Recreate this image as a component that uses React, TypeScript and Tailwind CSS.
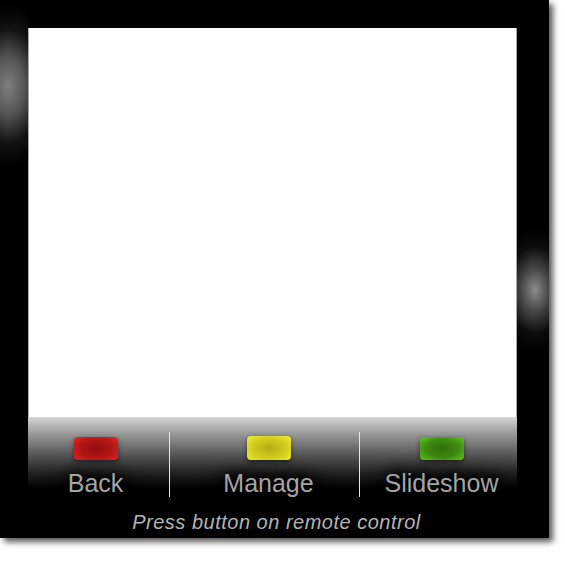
import React from 'react';

type Action = {
  label: string;
  width: string;
  shift: string;
  button: string;
};

const actions: Action[] = [
  {
    label: 'Back',
    width: 'w-[141px]',
    shift: 'pr-[6px]',
    button: 'mt-[5px] bg-[radial-gradient(ellipse_at_center,#8e0e0e_0%,#b41616_55%,#e82424_100%)]',
  },
  {
    label: 'Manage',
    width: 'w-[190px]',
    shift: 'pl-[8px]',
    button: 'mt-[4px] bg-[radial-gradient(ellipse_at_center,#b4ac14_0%,#d2cc1e_55%,#f4f034_100%)]',
  },
  {
    label: 'Slideshow',
    width: 'w-[158px]',
    shift: 'pl-[6px]',
    button: 'mt-[5px] bg-[radial-gradient(ellipse_at_center,#2f6e0c_0%,#3f8c12_55%,#62cc22_100%)]',
  },
];

export default function App() {
  return (
    <div className="w-[565px] h-[561px] bg-white font-['Liberation_Sans',Arial,sans-serif]">
      {/* Black TV frame */}
      <div className="relative w-[549px] h-[538px] bg-black pt-[28px] pl-[28px] shadow-[4px_4px_6px_rgba(0,0,0,0.65)]">
        {/* Reflections on the frame */}
        <div className="absolute left-0 top-[0px] w-[28px] h-[180px] bg-[radial-gradient(ellipse_48px_82px_at_8px_86px,rgba(128,128,128,1)_0%,rgba(105,105,105,0.8)_35%,rgba(45,45,45,0.4)_70%,rgba(0,0,0,0)_100%)]" />
        <div className="absolute left-[517px] top-[220px] w-[32px] h-[140px] bg-[radial-gradient(ellipse_40px_62px_at_18px_70px,rgba(140,140,140,1)_0%,rgba(100,100,100,0.7)_35%,rgba(40,40,40,0.3)_70%,rgba(0,0,0,0)_100%)]" />

        <div className="relative w-[489px]">
          {/* Screen */}
          <div className="h-[389px] bg-white border-x border-[#a8a8a8]" />

          {/* Button bar */}
          <div className="h-[121px] bg-[linear-gradient(to_bottom,#d6d6d6_0px,#9c9c9c_16px,#5c5c5c_36px,#1c1c1c_58px,#000_72px)]">
            <div className="flex pt-[15px]">
              {actions.map((a, i) => (
                <div
                  key={a.label}
                  className={`${a.width} h-[65px] flex flex-col items-center ${a.shift} ${
                    i > 0 ? 'border-l border-[#e6e6e6]' : ''
                  }`}
                >
                  <div
                    className={`w-[44px] h-[24px] rounded-[4px] shadow-[0_2px_5px_rgba(0,0,0,0.55)] ${a.button}`}
                  />
                  <div className="mt-[9px] text-[25px] leading-[28px] text-[#a4a4a4] [text-shadow:0_0_10px_#000,0_0_16px_#000,0_0_22px_#000]">
                    {a.label}
                  </div>
                </div>
              ))}
            </div>
            <div className="mt-[14px] text-center italic text-[20px] leading-[22px] tracking-[0.5px] text-[#b4b4b4] pl-[8px]">
              Press button on remote control
            </div>
          </div>
        </div>
      </div>
    </div>
  );
}
